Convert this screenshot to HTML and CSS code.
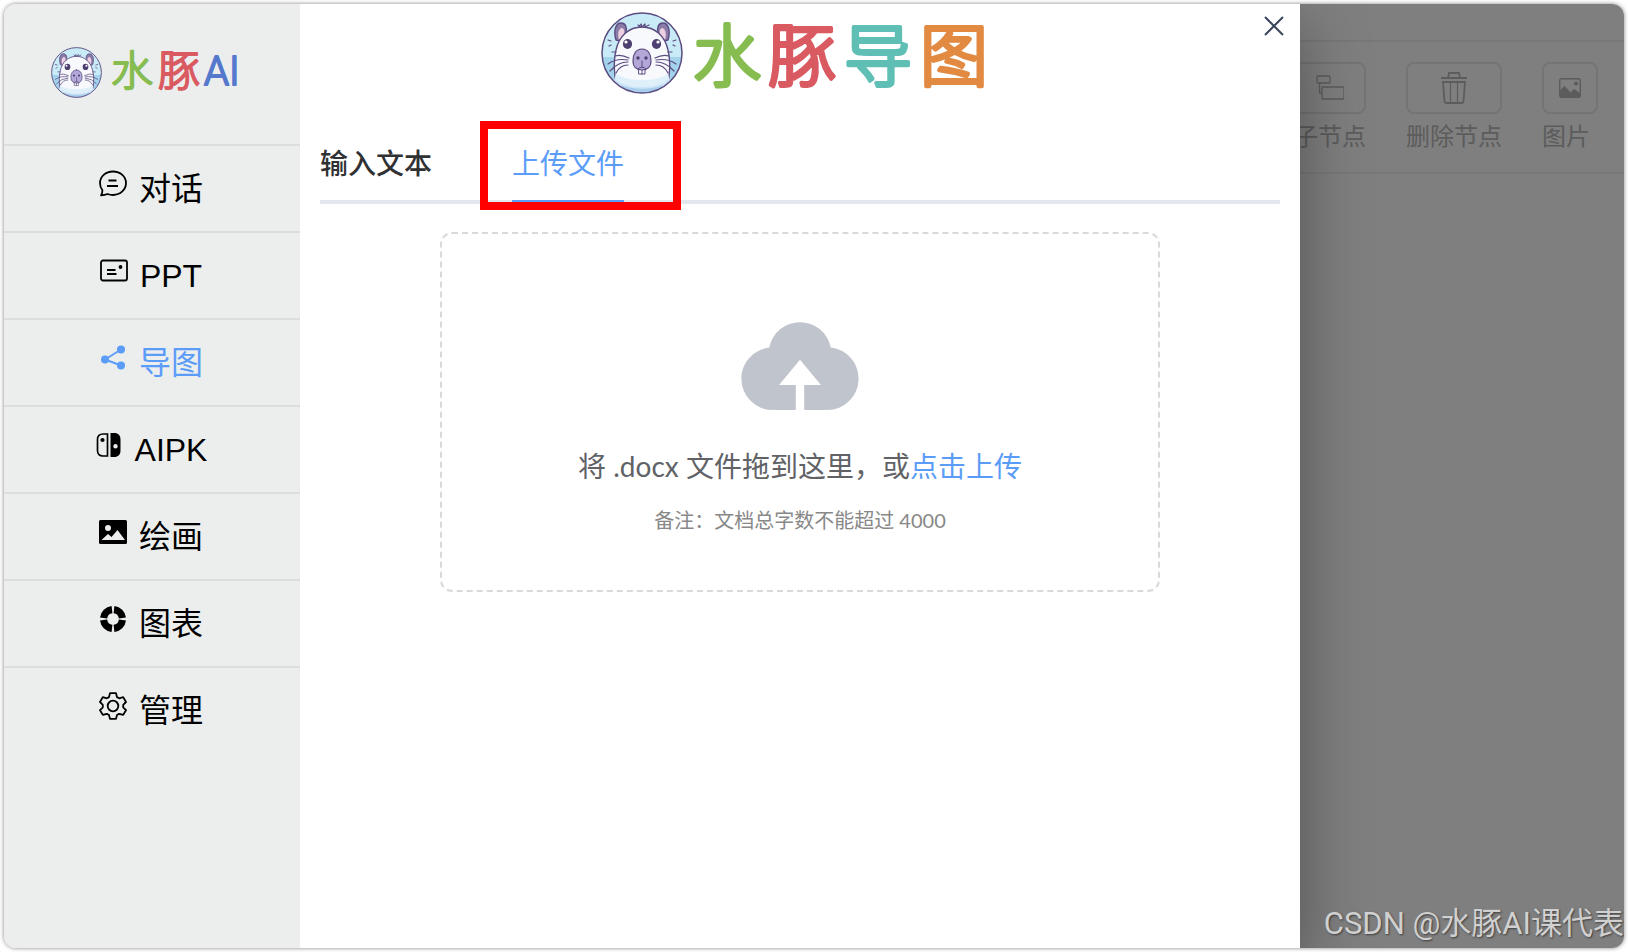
FILE: index.html
```html
<!DOCTYPE html>
<html lang="zh-CN">
<head>
    <meta charset="UTF-8">
    <meta name="viewport" content="width=device-width, initial-scale=1.0">
    <title>水豚导图</title>
    <link rel="stylesheet" href="styles.css">
</head>
<body>

    <!-- 水豚头像 -->
    <svg class="symbols" aria-hidden="true">
        <symbol id="capybara" viewBox="0 0 82 82">
            <defs>
                <clipPath id="face"><circle cx="41" cy="41" r="40"/></clipPath>
            </defs>
            <g clip-path="url(#face)" stroke-linecap="round" stroke-linejoin="round">
                <rect width="82" height="82" fill="#c9ebf7"/>
                <path d="M0 45h82v37H0z" fill="#a4d4ec"/>
                <g stroke="#5b4c80" stroke-width="1.4">
                    <path d="M15 28C12 18 15 11 20 11c5 0 6 5 5 9l-6 9z" fill="#8a7ba8"/>
                    <path d="M18 28c-2-7 0-12 3-12 3 1 3 5 1 8z" fill="#eccfe0" stroke="none"/>
                    <path d="M67 28c3-10 0-17-5-17s-6 5-5 9l6 9z" fill="#8a7ba8"/>
                    <path d="M64 28c2-7 0-12-3-12-3 1-3 5-1 8z" fill="#eccfe0" stroke="none"/>
                    <path d="M12 86c0-8 3-12 2-22-1-8-1-18 1-26C18 24 28 15 41 15s23 9 26 23c2 8 2 18 1 26-1 10 2 14 2 22z" fill="#f8f9fd"/>
                </g>
                <path d="M15 62c9 5 17 6 26 6s18-1 26-6l7 24H8z" fill="#dff0fb"/>
                <path d="M14 66c8 12 46 12 54 0l8 20H6z" fill="#cfe6f8"/>
                <path d="M20 73c12 5 30 5 42 0l-4 9H24z" fill="#a9cdec"/>
                <path d="M38 15l2-3 1 3 3-3 0 3 4-2M40 15l-3-2" fill="none" stroke="#5b4c80" stroke-width="1.2"/>
                <ellipse cx="26.500" cy="32" rx="4.600" ry="5" fill="#4d4070"/>
                <ellipse cx="55.500" cy="32" rx="4.600" ry="5" fill="#4d4070"/>
                <circle cx="25" cy="30" r="1.600" fill="#fff"/>
                <circle cx="57" cy="30" r="1.600" fill="#fff"/>
                <path d="M38 57h6v5h-6zM41 57v5" fill="#fff" stroke="#5b4c80" stroke-width="1"/>
                <path d="M41 37c6 0 9 5 9 12 0 6-4 9-9 9s-9-3-9-9c0-7 3-12 9-12z" fill="#b2a7d6" stroke="#5b4c80" stroke-width="1.200"/>
                <circle cx="37" cy="46" r="1.700" fill="#4d4070"/>
                <circle cx="45" cy="46" r="1.700" fill="#4d4070"/>
                <path d="M41 49v6M37 57q4-4 8 0" fill="none" stroke="#5b4c80"/>
                <path d="M28 46q-8-4-14-2M27 48q-12-2-20 4M27 50q-10 0-18 9M27 53q-8 0-12 8M11 40h4M54 46q8-4 14-2M55 48q12-2 20 4M55 50q10 0 18 9M55 53q8 0 12 8M67 40h4M7 28l3 1M8 34l2-1M75 28l-3 1M74 34l-2-1" fill="none" stroke="#5b4c80" stroke-width="1.200"/>
            </g>
            <circle cx="41" cy="41" r="40" fill="none" stroke="#5b4c80" stroke-width="1.500"/>
        </symbol>
    </svg>

    <div class="window">

        <!-- 左侧菜单 -->
        <aside class="sidebar">
            <div class="brand">
                <svg class="brand-face" aria-hidden="true"><use href="#capybara"/></svg>
                <svg class="brand-text" viewBox="0 0 132 52" role="img" aria-label="水豚AI">
                    <text class="green" x="1" y="40">水</text>
                    <text class="red" x="48" y="40">豚</text>
                    <text class="blue" x="94" y="39">AI</text>
                </svg>
            </div>
            <nav class="menu">
                <a class="menu-item" href="#chat">
                    <svg viewBox="0 0 28 28" fill="none" stroke="currentColor" stroke-width="1.8" stroke-linejoin="round"><path d="M14 1.500C21.500 1.500 27 6.500 27 13s-5.500 12-13 12c-2 0-4-.4-5.500-1-2 .8-4 1.200-6.500 1.400 1-1.700 1.500-3.400 1.400-5.200C1.700 18.200 1 15.700 1 13 1 6.500 6.500 1.500 14 1.500z"/><path d="M9.500 10.500h8M8 16h11"/></svg>
                    <span>对话</span>
                </a>
                <a class="menu-item" href="#ppt">
                    <svg viewBox="0 0 28 28" fill="none" stroke="currentColor" stroke-width="1.8"><rect x="1" y="3.500" width="26" height="20" rx="2"/><path d="M7 13h8.500M7 17h9.500"/><circle cx="20.500" cy="10" r="1.900" fill="currentColor" stroke="none"/></svg>
                    <span>PPT</span>
                </a>
                <a class="menu-item active" href="#mind">
                    <svg viewBox="0 0 28 28" fill="currentColor"><path d="M6 15.500L22 5.500M6 15.500l16 6" stroke="currentColor" stroke-width="1.900"/><circle cx="6" cy="15.500" r="4"/><circle cx="22" cy="5.500" r="4"/><circle cx="22" cy="21.500" r="4"/></svg>
                    <span>导图</span>
                </a>
                <a class="menu-item" href="#aipk">
                    <svg viewBox="0 0 28 28" fill="currentColor"><path d="M12.500 3v22H8c-3.500 0-5.500-2-5.500-5.500v-11C2.500 5 4.500 3 8 3z" fill="none" stroke="currentColor" stroke-width="1.700"/><circle cx="7.500" cy="9" r="2.100"/><path fill-rule="evenodd" d="M15.500 2H19c4.500 0 6.500 2.500 6.500 6.500v11c0 4-2 6.500-6.500 6.500h-3.500zM20.500 13a2.200 2.200 0 1 0 0 4.400 2.200 2.200 0 0 0 0-4.400z"/></svg>
                    <span>AIPK</span>
                </a>
                <a class="menu-item" href="#draw">
                    <svg viewBox="0 0 28 28" fill="currentColor"><path fill-rule="evenodd" d="M1.500 2h25Q28 2 28 3.500v21q0 1.500-1.500 1.500h-25Q0 26 0 24.500v-21Q0 2 1.500 2zM9 7a3 3 0 1 0 0 6 3 3 0 0 0 0-6zM2.500 22h23.500L18.500 12l-6 7-3.500-3z"/></svg>
                    <span>绘画</span>
                </a>
                <a class="menu-item" href="#chart">
                    <svg viewBox="0 0 28 28" fill="none" stroke="currentColor" stroke-width="7.200"><path d="M15 4.600A9.500 9.500 0 0 1 23.400 13M23.400 15A9.500 9.500 0 0 1 15 23.400M13 23.400A9.500 9.500 0 0 1 4.600 15M4.600 13A9.500 9.500 0 0 1 13 4.600"/></svg>
                    <span>图表</span>
                </a>
                <a class="menu-item" href="#admin">
                    <svg viewBox="0 0 28 28" fill="none" stroke="currentColor" stroke-width="1.800" stroke-linejoin="round"><path d="M11 1.200h6l1 3.900 2.200 1.200 4-1.200 2.800 4.900-2.800 2.800v2.600l2.800 2.800-2.800 4.700-4-1.100-2.200 1.200-1 3.900h-6l-1-3.900-2.200-1.200-4 1.100L1 18.200l2.800-2.800v-2.600L1 10l2.800-4.900 4 1.200L10 5.100z"/><circle cx="14" cy="14" r="5.300"/></svg>
                    <span>管理</span>
                </a>
            </nav>
        </aside>

        <!-- 导图抽屉 -->
        <main class="drawer">
            <button class="close" type="button" aria-label="关闭">
                <svg viewBox="0 0 20 20" fill="none" stroke="currentColor" stroke-width="2"><path d="M1 1l18 18M19 1L1 19"/></svg>
            </button>
            <h1 class="title">
                <svg class="title-face" aria-hidden="true"><use href="#capybara"/></svg>
                <svg class="title-text" viewBox="0 0 300 82" role="img" aria-label="水豚导图">
                    <text class="green" x="2" y="69">水</text>
                    <text class="red" x="77" y="69">豚</text>
                    <text class="teal" x="153" y="69">导</text>
                    <text class="orange" x="229" y="69">图</text>
                </svg>
            </h1>

            <div class="tabs" role="tablist">
                <button class="tab" type="button" role="tab" aria-selected="false">输入文本</button>
                <button class="tab active" type="button" role="tab" aria-selected="true">上传文件<span class="marker"></span></button>
            </div>

            <label class="upload" for="docx">
                <input class="upload-input" id="docx" type="file" accept=".docx">
                <svg class="upload-icon" viewBox="0 0 1024 1024" fill="currentColor"><path d="M544 864V672h128L512 480 352 672h128v192H320v-1.600c-5.376.32-10.496 1.600-16 1.600A240 240 0 0 1 64 624c0-123.136 93.120-223.488 212.608-237.248A239.808 239.808 0 0 1 512 192a239.872 239.872 0 0 1 235.456 194.752c119.488 13.760 212.480 114.112 212.480 237.248a240 240 0 0 1-240 240c-5.376 0-10.560-1.280-16-1.600v1.600z"/></svg>
                <span class="upload-text">将 .docx 文件拖到这里，或<em>点击上传</em></span>
                <span class="upload-tip">备注：文档总字数不能超过 4000</span>
            </label>
        </main>

        <!-- 被遮住的编辑区 -->
        <section class="editor">
            <div class="editor-top"></div>
            <div class="toolbar">
                <div class="tool">
                    <button class="tool-button" id="child" type="button">
                        <svg width="28" height="26" viewBox="0 0 28 26" fill="none" stroke="currentColor" stroke-width="1.300"><rect x="1" y="1" width="13" height="7" rx="1"/><rect x="6" y="12" width="22" height="12" rx="1"/><path d="M3.500 8v10H6"/></svg>
                    </button>
                    <label class="tool-label" for="child">子节点</label>
                </div>
                <div class="tool">
                    <button class="tool-button" id="remove" type="button">
                        <svg width="26" height="32" viewBox="0 0 26 32" fill="none" stroke="currentColor" stroke-width="1.800"><path d="M0 6h26M7 6l1-5h10l1 5M2 10h22l-1.500 19q-.2 2-2 2h-15q-1.800 0-2-2z"/><path d="M9.500 10v21M16.500 10v21" stroke-width="1.200"/></svg>
                    </button>
                    <label class="tool-label" for="remove">删除节点</label>
                </div>
                <div class="tool">
                    <button class="tool-button" id="picture" type="button">
                        <svg width="22" height="20" viewBox="0 0 22 20" fill="currentColor"><rect x=".7" y=".7" width="20.600" height="18.600" rx="2" fill="none" stroke="currentColor" stroke-width="1.400"/><path d="M1 12.500L5.500 8l6 6.500 3.500-3.500 6 4V19H1z"/><circle cx="17" cy="5.500" r="2"/></svg>
                    </button>
                    <label class="tool-label" for="picture">图片</label>
                </div>
            </div>
        </section>

        <div class="watermark">CSDN @水豚AI课代表</div>
    </div>

</body>
</html>
```

FILE: styles.css
```css
* {
    box-sizing: border-box;
}

body {
    margin: 0;
    padding: 4px;
    min-height: 100vh;
    display: flex;
    background-color: #fff;
    font-family: "Liberation Sans", "Noto Sans CJK SC", sans-serif;
}

button {
    border: none;
    background: none;
    padding: 0;
    font: inherit;
    cursor: pointer;
}

svg {
    display: block;
}

.symbols {
    position: absolute;
    width: 0;
    height: 0;
}

.window {
    position: relative;
    flex: 1;
    display: flex;
    overflow: hidden;
    border-radius: 12px;
    box-shadow: 0 0 4px rgba(0, 0, 0, 0.5);
}

/* Logo */
.brand-text,
.title-text {
    fill: currentColor;
    stroke-linejoin: round;
    font-family: "Noto Sans CJK SC", sans-serif;
    font-weight: 300;
}

.green { fill: #86bc50; stroke: #86bc50; }
.red { fill: #da5a62; stroke: #da5a62; }
.blue { fill: #5478cc; stroke: #5478cc; }
.teal { fill: #60bfb5; stroke: #60bfb5; }
.orange { fill: #e28a42; stroke: #e28a42; }

/* 左侧菜单 */
.sidebar {
    position: relative;
    z-index: 2;
    flex: 0 0 296px;
    background-color: #eceeee;
}

.brand {
    height: 140px;
    padding: 0 0 4px 47px;
    display: flex;
    align-items: center;
    gap: 8px;
}

.brand-face {
    width: 51px;
    height: 51px;
}

.brand-text {
    width: 132px;
    height: 52px;
    font-size: 42px;
    stroke-width: 2px;
}

.brand-text .blue {
    font-family: Roboto, sans-serif;
    font-size: 40px;
}

.menu-item {
    display: flex;
    justify-content: center;
    gap: 12px;
    padding: 21px 2px 19px 0;
    border-top: 2px solid #dcdddd;
    color: #000;
    font-size: 32px;
    line-height: 45px;
    text-decoration: none;
}

.menu-item svg {
    width: 28px;
    height: 28px;
    margin-top: 3px;
}

.menu-item.active {
    color: #5b9cf8;
}

/* 抽屉 */
.drawer {
    position: relative;
    z-index: 1;
    flex: 1;
    padding: 8px 20px;
    background-color: #fff;
    box-shadow: 0 24px 64px rgba(0, 0, 0, 0.36);
}

.close {
    position: absolute;
    top: 12px;
    right: 16px;
    color: #3a465c;
}

.close svg {
    width: 20px;
    height: 20px;
}

.title {
    display: flex;
    justify-content: center;
    align-items: center;
    gap: 8px;
    height: 82px;
    margin: 0 8px 30px 0;
}

.title-face {
    width: 82px;
    height: 82px;
}

.title-text {
    width: 300px;
    height: 82px;
    font-size: 68px;
    stroke-width: 4px;
}

.tabs {
    display: flex;
    gap: 80px;
    border-bottom: 4px solid #e4e7ed;
}

.tab {
    position: relative;
    margin-bottom: -4px;
    padding: 21px 0 15px;
    border-bottom: 4px solid transparent;
    color: #303133;
    font-size: 28px;
    font-weight: 500;
    line-height: 40px;
}

.tab.active {
    border-color: #5b9cf8;
    color: #5b9cf8;
    font-weight: 400;
}

/* 红色标注框 */
.marker {
    position: absolute;
    top: -3px;
    right: -57px;
    bottom: -10px;
    left: -32px;
    border: 8px solid #f00;
}

.upload {
    display: flex;
    flex-direction: column;
    align-items: center;
    width: 75%;
    margin: 28px auto 0;
    padding: 63px 20px 55px;
    border: 2px dashed #d9d9d9;
    border-radius: 12px;
    font-family: Lato, "Noto Sans CJK SC", sans-serif;
    cursor: pointer;
}

.upload-input {
    display: none;
}

.upload-icon {
    width: 134px;
    height: 134px;
    color: #c0c4cc;
}

.upload-text {
    margin: 15px 0 19px;
    color: #606266;
    font-size: 28px;
    line-height: 40px;
}

.upload-text em {
    color: #5b9cf8;
    font-style: normal;
}

.upload-tip {
    color: #888;
    font-size: 20px;
    line-height: 30px;
}

/* 编辑区 */
.editor {
    flex: 0 0 20%;
    overflow: hidden;
    background-color: #7f7f7f;
}

.editor-top {
    height: 38px;
    border-bottom: 2px solid #777;
}

.toolbar {
    display: flex;
    justify-content: flex-end;
    gap: 40px;
    padding: 20px 26px 17px 0;
    border-bottom: 2px solid #797979;
    color: #5c5c5c;
}

.tool {
    flex: none;
    min-width: 56px;
}

.tool-button {
    display: flex;
    justify-content: center;
    align-items: center;
    width: 100%;
    height: 52px;
    border: 2px solid #747474;
    border-radius: 8px;
    color: inherit;
}

.tool-label {
    display: block;
    margin-top: 5px;
    font-size: 24px;
    line-height: 36px;
}

.watermark {
    position: absolute;
    z-index: 2;
    right: 0;
    bottom: 1px;
    color: #d0d0d0;
    font-family: Roboto, "Noto Sans CJK SC", sans-serif;
    font-size: 31px;
    font-weight: 400;
    line-height: 46px;
    text-shadow: 1px 1px 2px rgba(0, 0, 0, 0.5);
}
```
